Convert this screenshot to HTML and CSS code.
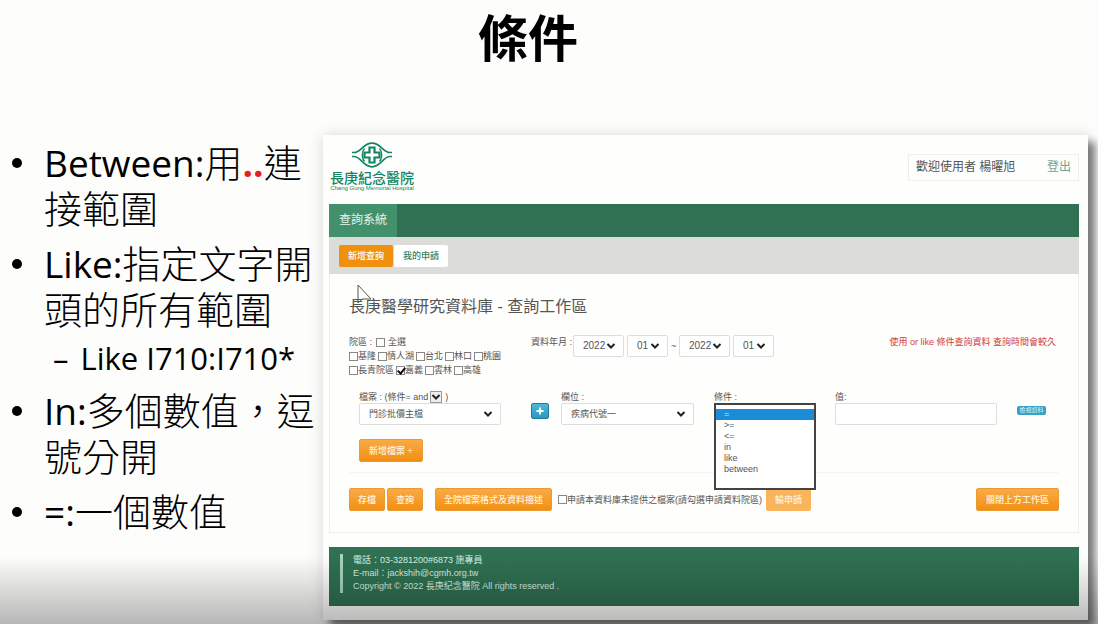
FILE: index.html
```html
<!DOCTYPE html>
<html lang="zh-Hant">
<head>
<meta charset="utf-8">
<meta name="viewport" content="width=device-width, initial-scale=1">
<title>條件</title>
<link rel="stylesheet" href="styles.css">
</head>
<body>
<svg class="defs" aria-hidden="true"><symbol id="chev" viewBox="0 0 10 8"><path d="M1.500 2 5 5.500 8.500 2" fill="none" stroke="#222" stroke-width="2"/></symbol></svg>
<main class="slide">
  <h1 class="slide-title">條件</h1>
  <div class="slide-body">
    <ul class="points">
      <li><span class="latin">Between:</span>用<span class="dots">..</span>連<br>接範圍</li>
      <li><span class="latin">Like:</span>指定文字開<br>頭的所有範圍
        <ul class="subpoints"><li>Like I710:I710*</li></ul>
      </li>
      <li><span class="latin">In:</span>多個數值，逗<br>號分開</li>
      <li><span class="latin">=:</span>一個數值</li>
    </ul>
    <section class="app">
      <header class="app-head">
        <div class="logo">
          <svg class="logo-mark" viewBox="0 0 40 26" fill="none" stroke="#128562">
            <path d="M0 10.500H2C9 10.500 11 1.200 20 1.200S31 10.500 38 10.500H40M0 14.500H2C9 14.500 11 24.800 20 24.800S31 14.500 38 14.500H40" stroke-width="1.700"/>
            <path d="M12.500 6.500C9.500 10 9.500 16 12.500 19.500M27.500 6.500C30.500 10 30.500 16 27.500 19.500" stroke-width="1.300"/>
            <path d="M17.500 5.500h5v5h5v5h-5v5h-5v-5h-5v-5h5Z" fill="#fff" stroke-width="2.200"/>
          </svg>
          <span class="logo-name">長庚紀念醫院</span>
          <span class="logo-sub">Chang Gung Memorial Hospital</span>
        </div>
        <div class="user"><span>歡迎使用者 楊曜旭</span><a href="#">登出</a></div>
      </header>
      <nav class="nav"><a href="#">查詢系統</a></nav>
      <div class="tabs">
        <button class="tab tab-on" type="button">新增查詢</button><button class="tab" type="button">我的申請</button>
      </div>
      <form class="work">
        <h2>長庚醫學研究資料庫 - 查詢工作區</h2>
        <div class="top-row">
          <div class="areas">
            <div class="area-line"><span>院區 :</span><label class="all"><input type="checkbox">全選</label></div>
            <div class="area-line"><label><input type="checkbox">基隆</label><label><input type="checkbox">情人湖</label><label><input type="checkbox">台北</label><label><input type="checkbox">林口</label><label><input type="checkbox">桃園</label></div>
            <div class="area-line"><label><input type="checkbox">長青院區</label><label><input type="checkbox" checked>嘉義</label><label><input type="checkbox">雲林</label><label><input type="checkbox">高雄</label></div>
          </div>
          <div class="dates">
            <span class="date-label">資料年月 :</span>
            <span class="pick year"><select aria-label="起始年"><option>2022</option></select><svg><use href="#chev"/></svg></span>
            <span class="pick month"><select aria-label="起始月"><option>01</option></select><svg><use href="#chev"/></svg></span>
            <span class="tilde">~</span>
            <span class="pick year"><select aria-label="結束年"><option>2022</option></select><svg><use href="#chev"/></svg></span>
            <span class="pick month"><select aria-label="結束月"><option>01</option></select><svg><use href="#chev"/></svg></span>
          </div>
          <p class="warn">使用 or like 條件查詢資料 查詢時間會較久</p>
        </div>
        <div class="query">
          <div class="field file">
            <div class="cap"><label for="file">檔案 : (條件= and</label><span class="pick mini"><select aria-label="and"><option></option></select><svg><use href="#chev"/></svg></span><span class="paren">)</span></div>
            <span class="pick"><select id="file"><option>門診批價主檔</option></select><svg><use href="#chev"/></svg></span>
          </div>
          <button class="plus" type="button" aria-label="新增"><svg viewBox="0 0 8 8"><path d="M4 .5v7M.5 4h7" stroke="#fff" stroke-width="2"/></svg></button>
          <div class="field">
            <div class="cap"><label for="col">欄位 :</label></div>
            <span class="pick"><select id="col"><option>疾病代號一</option></select><svg><use href="#chev"/></svg></span>
          </div>
          <div class="field cond">
            <div class="cap"><label for="op">條件 :</label></div>
            <select class="oplist" id="op" size="7"><option selected>=</option><option>&gt;=</option><option>&lt;=</option><option>in</option><option>like</option><option>between</option></select>
          </div>
          <div class="field">
            <div class="cap"><label for="val">值:</label></div>
            <input class="val" id="val" type="text">
          </div>
          <button class="search" type="button">檢視資料</button>
        </div>
        <div class="add-row"><button class="btn" type="button">新增檔案 +</button></div>
        <div class="actions">
          <button class="btn" type="button">存檔</button>
          <button class="btn" type="button">查詢</button>
          <button class="btn wide" type="button">全院檔案格式及資料描述</button>
          <label class="apply"><input type="checkbox">申請本資料庫未提供之檔案(請勾選申請資料院區)</label>
          <button class="btn pale" type="button">輸申請</button>
          <button class="btn close" type="button">關閉上方工作區</button>
        </div>
      </form>
      <footer class="foot">
        <div class="foot-text">
          <p>電話：03-3281200#6873 施專員</p>
          <p>E-mail：jackshih@cgmh.org.tw</p>
          <p>Copyright © 2022 長庚紀念醫院 All rights reserved .</p>
        </div>
      </footer>
      <svg class="cursor" viewBox="0 0 16 22"><path d="M1 1v18l4.500-4H14Z" fill="none" stroke="#555"/></svg>
    </section>
  </div>
  <div class="shade"></div>
</main>
</body>
</html>
```
FILE: styles.css
```css
* { box-sizing: border-box; }
body { margin: 0; background: #fdfdfc; font-family: "Liberation Sans", "Noto Sans CJK TC", sans-serif; color: #555; }
p, h1, h2, ul { margin: 0; padding: 0; }
button, input, select { font: inherit; color: inherit; margin: 0; }
.defs { position: absolute; width: 0; height: 0; }
.slide { position: relative; min-height: 100vh; overflow: hidden; }
.slide-title { padding-right: 42px; height: 134px; text-align: center; color: #000; font: bold 50px/70px "Noto Sans CJK TC", sans-serif; }
.slide-body { display: grid; grid-template-columns: 323px 1fr; align-items: start; padding-right: 10px; }

.points { list-style: none; padding: 5px 0 0 44px; color: #000; font: 300 38px/46px "Open Sans", "Noto Sans CJK TC", sans-serif; white-space: nowrap; }
.points > li { position: relative; margin-bottom: 9px; }
.points > li::before { content: ""; position: absolute; left: -32px; top: 19px; width: 10px; height: 10px; border-radius: 50%; background: #000; }
.latin { font-weight: 400; font-size: 37px; line-height: 30px; }
.dots { color: #e8201c; font-weight: 700; font-size: 37px; line-height: 30px; }
.subpoints { list-style: none; padding: 6px 0 0 9px; font-size: 31px; line-height: 40px; font-weight: 400; }
.subpoints li { display: flex; gap: 12px; }
.subpoints li::before { content: "–"; }

.app { position: relative; margin-top: 1px; padding: 6px 9px 14px 6px; background: #fefefd; box-shadow: 7px 7px 8px #777, 0 0 14px #ddd; font-size: 9px; line-height: 14px; }
.app-head { display: flex; justify-content: space-between; align-items: flex-start; height: 63px; }
.logo { display: flex; flex-direction: column; align-items: center; color: #128562; margin-left: 2px; width: 82px; white-space: nowrap; }
.logo-mark { width: 40px; height: 28px; }
.logo-name { font: 500 14px/16px "Noto Sans CJK TC", sans-serif; }
.logo-sub { font-size: 6px; line-height: 7px; }
.user { display: flex; justify-content: space-between; width: 171px; margin-top: 13px; padding: 0 7px; border: 1px solid #eee; font-size: 12px; line-height: 25px; }
.user a { color: #6fa597; text-decoration: none; }
.nav { display: flex; background: #2f7152; }
.nav a { padding: 0 10px; background: #43906d; color: #e4f4ea; font-size: 12px; line-height: 33px; text-decoration: none; }
.tabs { display: flex; height: 37px; padding: 8px 10px; background: #dcdcda; gap: 1px; }
.tab { width: 54px; height: 22px; padding: 0; border: 0; border-radius: 2px; background: #fff; color: #397f61; font-weight: 500; }
.tab-on { background: #f0900f; color: #fff; }

.work { padding: 22px 19px 0; height: 259px; border: 1px solid #efefed; border-top: 0; }
h2 { font-size: 16px; line-height: 22px; font-weight: 400; }
.top-row { display: flex; align-items: flex-start; margin-top: 17px; height: 56px; }
.areas { width: 182px; }
.area-line, .area-line label, .apply { display: flex; align-items: center; gap: 2px; white-space: nowrap; }
.area-line label, .apply { gap: 0; }
.area-line { height: 14px; }
.area-line .all { gap: 3px; margin-left: 2px; }
input[type=checkbox] { appearance: none; position: relative; flex: none; width: 9px; height: 9px; border: 1px solid #888; background: #fff; }
input[type=checkbox]:checked::after { content: ""; position: absolute; left: 2px; top: -1px; width: 3px; height: 6px; border: solid #111; border-width: 0 2px 2px 0; transform: rotate(40deg); }
.dates { display: flex; gap: 3px; white-space: nowrap; }
.date-label { width: 39px; }
.tilde { padding: 4px 0; width: 5px; }
.pick { position: relative; display: block; }
.pick select { display: block; appearance: none; width: 100%; height: 22px; padding: 0 9px; border: 1px solid #ddd; border-radius: 2px; background: #fff; }
.pick svg { position: absolute; right: 8px; top: 7px; width: 10px; height: 8px; pointer-events: none; }
.year { width: 51px; }
.month { width: 41px; }
.dates .pick select { font-size: 10px; }
.warn { margin-left: auto; padding-right: 3px; color: #d23a3a; white-space: nowrap; }
.query { display: grid; grid-template-columns: 172fr 30fr 153fr 121fr 182fr 42fr; padding-left: 10px; height: 48px; }
.field { padding-right: 20px; min-width: 0; }
.file { padding-right: 30px; }
.cap { display: flex; align-items: center; height: 12px; white-space: nowrap; }
.mini { width: 12px; margin-left: 2px; }
.cap .mini select { height: 12px; padding: 0; border-color: #999; border-radius: 0; background: #eee; }
.mini svg { right: 1px; top: 2px; }
.paren { margin-left: 3px; }
.plus { width: 18px; height: 16px; margin-top: 12px; padding: 0; border: 1px solid #23799c; border-radius: 2px; background: linear-gradient(#4bb9dc, #2d97bf); display: grid; place-items: center; }
.plus svg { width: 8px; height: 8px; }
.cond { position: relative; }
.oplist { position: absolute; z-index: 2; left: 0; top: 12px; width: 102px; height: 87px; padding: 4px 0; border: 2px solid #444; border-radius: 0; background: #fff; overflow: hidden; outline: 0; line-height: 11px; }
.oplist option { min-height: 0; height: 11px; padding: 0 8px; line-height: 11px; }
.oplist option:checked { background: linear-gradient(#1b8dd6, #1b8dd6); color: #cfe9fb; }
.val { display: block; width: 100%; height: 22px; border: 1px solid #ddd; border-radius: 2px; background: #fff; }
.search { width: 29px; height: 9px; margin-top: 15px; padding: 0; border: 0; border-radius: 2px; background: #35a0c4; color: #e4f5fb; font-size: 6px; line-height: 9px; white-space: nowrap; }
.btn { height: 23px; padding: 0 8px; border: 1px solid #e99a30; border-radius: 2px; background: linear-gradient(#f9ab45, #f28f12); color: #fff3dc; font-weight: 500; white-space: nowrap; }
.add-row { padding: 0 0 10px 10px; border-bottom: 1px solid #f4f4f2; }
.add-row .btn { display: block; min-width: 64px; }
.actions { display: flex; align-items: center; gap: 2px; margin-top: 15px; }
.actions .wide { margin-left: 10px; }
.apply { margin: 0 2px 0 4px; }
.actions .pale { background: #f9b45c; border-color: #f9b45c; }
.actions .close { margin-left: auto; padding: 0 9px; }

.foot { margin-top: 14px; height: 59px; padding: 7px 11px; background: #2f7152; color: #d7eee2; }
.foot-text { padding-left: 10px; border-left: 3px solid #a5d5bf; line-height: 13px; }
.cursor { position: absolute; left: 34px; top: 149px; width: 16px; height: 22px; }
.shade { position: absolute; z-index: 3; left: 0; right: 0; bottom: 0; height: 68px; background: linear-gradient(transparent, rgba(0,0,0,.28)); pointer-events: none; }
```
